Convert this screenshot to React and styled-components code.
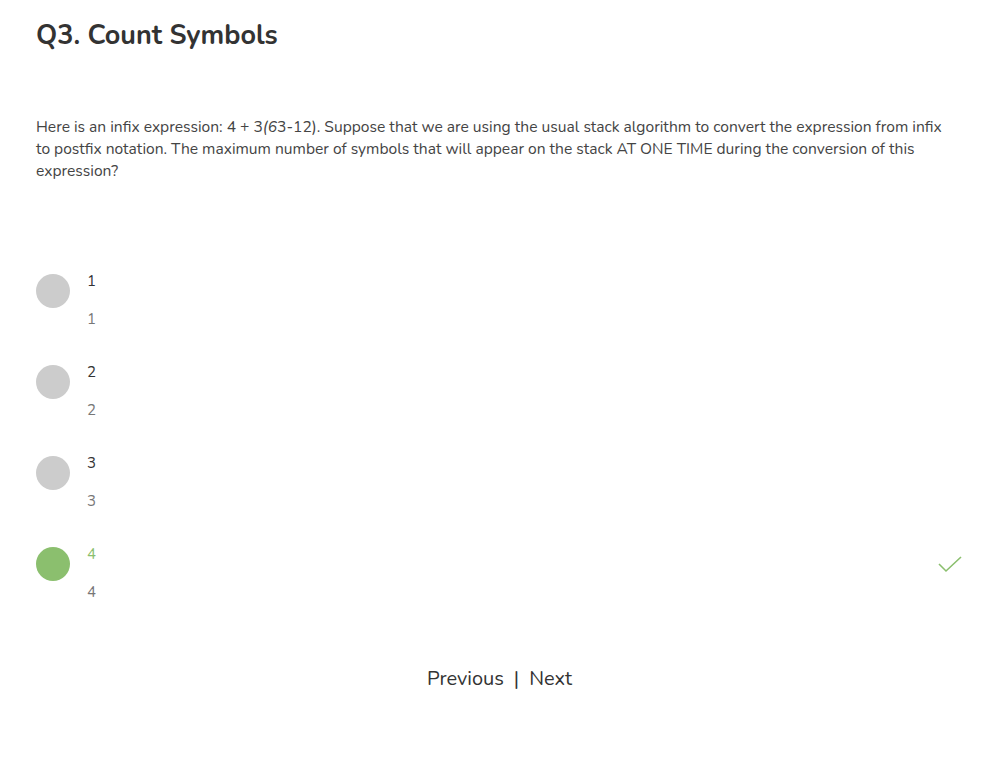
import React from "react";
import styled, { createGlobalStyle } from "styled-components";

const Global = createGlobalStyle`
  body {
    margin: 0;
    background: #fff;
    font-family: "Nunito", Lato, "Noto Sans", sans-serif;
    color: #333;
  }
`;

const Page = styled.div`
  padding: 16px 25px 0 36px;
  display: flex;
  flex-direction: column;
`;

const Title = styled.h1`
  margin: 0;
  font-size: 27px;
  font-weight: 700;
  color: #333;
  line-height: 40px;
`;

const Question = styled.p`
  margin: 60px 0 0;
  font-size: 15.6px;
  line-height: 22px;
  color: #444;
  max-width: 918px;
`;

const Options = styled.div`
  margin-top: 88px;
  display: flex;
  flex-direction: column;
  gap: 31px;
`;

const Option = styled.div`
  display: flex;
  align-items: flex-start;
`;

const Dot = styled.div`
  margin-top: 4px;
  width: 34px;
  height: 34px;
  border-radius: 50%;
  background: ${(p) => (p.$correct ? "#8bbf6e" : "#cccccc")};
  flex-shrink: 0;
`;

const Labels = styled.div`
  margin-left: 17px;
  display: flex;
  flex-direction: column;
  gap: 16px;
  font-size: 15px;
  line-height: 22px;
`;

const Main = styled.span`
  color: ${(p) => (p.$correct ? "#8bbf6e" : "#333")};
`;

const Sub = styled.span`
  color: #777;
`;

const Check = styled.svg`
  margin-left: auto;
  margin-top: 11px;
`;

const Nav = styled.div`
  margin-top: 62px;
  display: flex;
  justify-content: center;
  gap: 10px;
  font-size: 20px;
  color: #333;
`;

const options = ["1", "2", "3", "4"];
const correct = "4";

export default function App() {
  return (
    <Page>
      <Global />
      <Title>Q3. Count Symbols</Title>
      <Question>
        Here is an infix expression: 4 + 3<i>(6</i>3-12). Suppose that we are
        using the usual stack algorithm to convert the expression from infix to
        postfix notation. The maximum number of symbols that will appear on the
        stack AT ONE TIME during the conversion of this expression?
      </Question>
      <Options>
        {options.map((o) => (
          <Option key={o}>
            <Dot $correct={o === correct} />
            <Labels>
              <Main $correct={o === correct}>{o}</Main>
              <Sub>{o}</Sub>
            </Labels>
            {o === correct && (
              <Check width="26" height="20" viewBox="0 0 26 20">
                <path d="M2 10 L9 17 L24 3" fill="none" stroke="#8bbf6e" strokeWidth="1.6" />
              </Check>
            )}
          </Option>
        ))}
      </Options>
      <Nav>
        <span>Previous</span>
        <span>|</span>
        <span>Next</span>
      </Nav>
    </Page>
  );
}
